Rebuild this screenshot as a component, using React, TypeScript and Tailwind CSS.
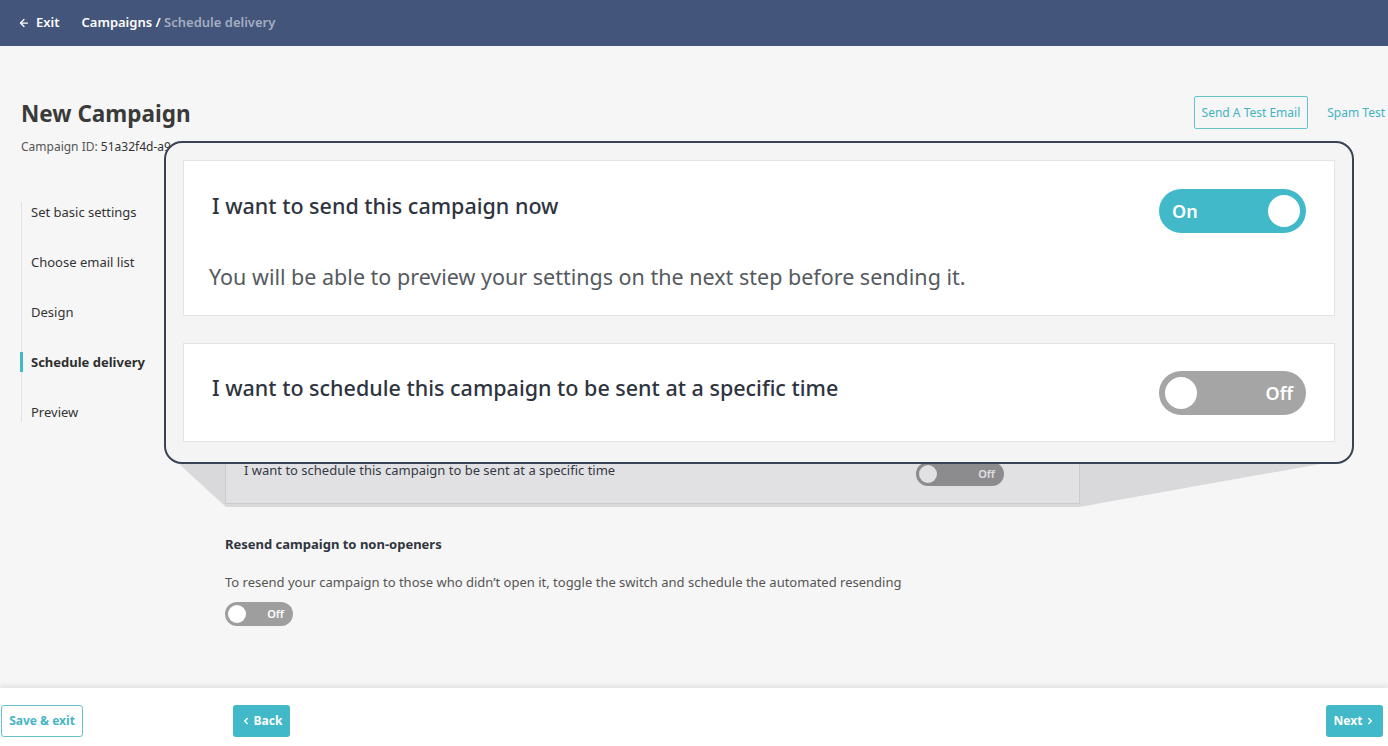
import { ArrowLeft, ChevronLeft, ChevronRight } from 'lucide-react'

const steps = ['Set basic settings', 'Choose email list', 'Design', 'Schedule delivery', 'Preview']

function BigToggle({ on }: { on: boolean }) {
  return (
    <div
      className={
        on
          ? 'w-[147px] h-[44px] rounded-full bg-[#41b9c9] flex items-center justify-between pl-[13px] pr-[6px]'
          : 'w-[147px] h-[44px] rounded-full bg-[#a5a5a5] flex items-center justify-between pl-[6px] pr-[13px]'
      }
    >
      {on && <span className="text-white text-[18px] font-semibold">On</span>}
      <span className="w-[32px] h-[32px] rounded-full bg-white" />
      {!on && <span className="text-white text-[18px] font-semibold">Off</span>}
    </div>
  )
}

function SmallToggle({ w }: { w: string }) {
  return (
    <div className={`${w} h-[24px] rounded-full bg-[#9e9e9e] flex items-center justify-between pl-[3px] pr-[9px]`}>
      <span className="w-[18px] h-[18px] rounded-full bg-white" />
      <span className="text-white text-[11px] font-semibold">Off</span>
    </div>
  )
}

function App() {
  return (
    <div className="h-[746px] flex flex-col bg-[#f6f6f6] font-['Noto_Sans',sans-serif] overflow-hidden">
      <header className="h-[46px] shrink-0 bg-[#43557a] flex items-center px-[18px] text-[13px]">
        <div className="flex items-center gap-[6px] text-white font-semibold">
          <ArrowLeft size={12} strokeWidth={2.5} />
          <span>Exit</span>
        </div>
        <div className="ml-[22px] font-semibold">
          <span className="text-white">Campaigns / </span>
          <span className="text-[#a3adc2]">Schedule delivery</span>
        </div>
      </header>

      <div className="relative flex-1">
        <div className="flex justify-between items-start pl-[21px] pr-[3px] pt-[52px]">
          <div>
            <h1 className="text-[22.5px] leading-[32px] font-bold text-[#3a3a3a]">New Campaign</h1>
            <p className="mt-[9px] text-[12px] leading-[16px] text-[#555]">
              Campaign ID: <span className="text-[#333]">51a32f4d-a9e</span>
            </p>
          </div>
          <div className="flex items-center gap-[19px] mt-[-2px]">
            <button className="h-[33px] px-[7px] border border-[#64c3ce] rounded-[2px] text-[12px] text-[#3fb3c2] bg-transparent">
              Send A Test Email
            </button>
            <span className="text-[12px] text-[#3fb3c2]">Spam Test</span>
          </div>
        </div>

        <div className="flex mt-[47px]">
          <nav className="w-[225px] pl-[21px] shrink-0">
            <ul className="border-l border-[#e2e2e2] flex flex-col gap-[30px]">
              {steps.map((s) => (
                <li
                  key={s}
                  className={
                    s === 'Schedule delivery'
                      ? 'relative pl-[9px] leading-[20px] text-[13px] font-bold text-[#2f2f2f]'
                      : 'relative pl-[9px] leading-[20px] text-[13px] text-[#333]'
                  }
                >
                  {s === 'Schedule delivery' && (
                    <span className="absolute -left-[2px] top-0 w-[3px] h-[20px] bg-[#41b9c9]" />
                  )}
                  {s}
                </li>
              ))}
            </ul>
          </nav>

          <div className="w-[855px] flex flex-col">
            <div className="h-[200px] bg-white border border-[#e6e6e6]" />
            <div className="mt-[22px] h-[80px] bg-white border border-[#e6e6e6] flex justify-between items-start pl-[18px] pr-[75px] pt-[35px]">
              <span className="text-[13px] leading-[20px] text-[#3a3f4a]">
                I want to schedule this campaign to be sent at a specific time
              </span>
              <div className="mt-[2px]">
                <SmallToggle w="w-[88px]" />
              </div>
            </div>

            <h3 className="mt-[30px] text-[13px] leading-[20px] font-bold text-[#2f3540]">
              Resend campaign to non-openers
            </h3>
            <p className="mt-[18px] text-[13px] leading-[20px] text-[#555]">
              To resend your campaign to those who didn’t open it, toggle the switch and schedule the automated resending
            </p>
            <div className="mt-[10px]">
              <SmallToggle w="w-[68px]" />
            </div>
          </div>
        </div>

        <svg className="absolute left-0 top-0 w-full h-full pointer-events-none">
          <polygon points="178,417 1326,417 1079,461 226,461" fill="rgba(20,25,40,0.13)" />
        </svg>

        <div className="absolute left-[164px] top-[95px] w-[1190px] h-[323px] border-2 border-[#394354] rounded-[18px] bg-[#f4f4f5] px-[17px] pt-[17px] flex flex-col">
          <div className="h-[156px] bg-white border border-[#e3e3e3] flex flex-col">
            <div className="flex justify-between items-start pl-[28px] pr-[28px] pt-[28px]">
              <h2 className="text-[21.5px] leading-[32px] mt-[1px] font-medium text-[#2e3440]">
                I want to send this campaign now
              </h2>
              <BigToggle on />
            </div>
            <p className="pl-[25px] mt-[28px] text-[21.5px] leading-[32px] text-[#555a60]">
              You will be able to preview your settings on the next step before sending it.
            </p>
          </div>
          <div className="mt-[27px] h-[99px] bg-white border border-[#e3e3e3] flex justify-between items-start pl-[28px] pr-[28px] pt-[27px]">
            <h2 className="text-[21.5px] leading-[32px] mt-[1px] font-medium text-[#2e3440]">
              I want to schedule this campaign to be sent at a specific time
            </h2>
            <BigToggle on={false} />
          </div>
        </div>
      </div>

      <footer className="h-[58px] shrink-0 bg-white shadow-[0_-3px_5px_rgba(0,0,0,0.08)] flex items-start pt-[17px] pl-[1px] pr-[5px] relative">
        <button className="h-[32px] w-[82px] border border-[#64c3ce] rounded-[3px] text-[12px] font-bold text-[#46b5c3] bg-white">
          Save &amp; exit
        </button>
        <button className="ml-[150px] h-[32px] w-[57px] rounded-[3px] bg-[#41b9c9] text-white text-[12px] font-bold flex items-center justify-center gap-[3px]">
          <ChevronLeft size={10} strokeWidth={3.5} />
          Back
        </button>
        <button className="ml-auto h-[32px] w-[57px] rounded-[3px] bg-[#41b9c9] text-white text-[12px] font-bold flex items-center justify-center gap-[3px]">
          Next
          <ChevronRight size={10} strokeWidth={3.5} />
        </button>
      </footer>
    </div>
  )
}

export default App
